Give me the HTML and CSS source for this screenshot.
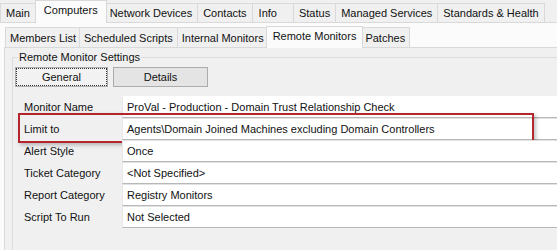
FILE: index.html
```html
<!DOCTYPE html>
<html lang="en">
<head>
  <meta charset="UTF-8" />
  <title>Remote Monitors</title>
  <link rel="stylesheet" href="styles.css">
</head>
<body>
  <div class="tabs top-tabs">
    <span class="tab">Main</span>
    <span class="tab selected">Computers</span>
    <span class="tab">Network Devices</span>
    <span class="tab">Contacts</span>
    <span class="tab wide">Info</span>
    <span class="tab">Status</span>
    <span class="tab">Managed Services</span>
    <span class="tab">Standards &amp; Health</span>
  </div>

  <div class="top-panel">
    <div class="tabs sub-tabs">
      <span class="tab">Members List</span>
      <span class="tab">Scheduled Scripts</span>
      <span class="tab">Internal Monitors</span>
      <span class="tab selected">Remote Monitors</span>
      <span class="tab">Patches</span>
    </div>

    <div class="sub-panel">
      <fieldset class="group">
        <legend>Remote Monitor Settings</legend>

        <div class="buttons">
          <button class="btn focused">General</button>
          <button class="btn details">Details</button>
        </div>

        <div class="props">
          <div class="row">
            <span class="label">Monitor Name</span>
            <span class="value">ProVal - Production - Domain Trust Relationship Check</span>
          </div>
          <div class="row highlighted">
            <span class="label">Limit to</span>
            <span class="value">Agents\Domain Joined Machines excluding Domain Controllers</span>
            <div class="callout"></div>
          </div>
          <div class="row">
            <span class="label">Alert Style</span>
            <span class="value">Once</span>
          </div>
          <div class="row">
            <span class="label">Ticket Category</span>
            <span class="value">&lt;Not Specified&gt;</span>
          </div>
          <div class="row">
            <span class="label">Report Category</span>
            <span class="value">Registry Monitors</span>
          </div>
          <div class="row">
            <span class="label">Script To Run</span>
            <span class="value">Not Selected</span>
          </div>
        </div>
      </fieldset>
    </div>
  </div>
</body>
</html>
```

FILE: styles.css
```css
:root {
  --bg: #f0f0f0;
  --panel: #fbfbfb;
  --line: #d9d9d9;
  --field-line: #b8b8b8;
  --text: #111111;
  --red: #b3262c;
}

* {
  box-sizing: border-box;
}

html, body {
  margin: 0;
  padding: 0;
}

body {
  height: 250px;
  overflow: hidden;
  background: var(--bg);
  color: var(--text);
  font-family: 'Liberation Sans', Arial, sans-serif;
  font-size: 11px;
}

/* tab strips */
.tabs {
  display: flex;
  align-items: flex-end;
  border-bottom: 1px solid var(--line);
}

.tab {
  position: relative;
  border: 1px solid var(--line);
  border-bottom: none;
  margin-right: -1px;
  background: var(--bg);
  white-space: nowrap;
  text-align: center;
}

.tab.selected {
  z-index: 1;
  background: var(--panel);
  margin: 0 -3px -1px -2px;
}

.top-tabs {
  height: 23px;
  background: var(--bg);
}

.top-tabs .tab {
  height: 19px;
  line-height: 18px;
  padding: 0 5px;
}

.top-tabs .tab:first-child {
  padding: 0 7px 0 5px;
}

.top-tabs .tab.wide {
  padding: 0 16px 0 6px;
}

.top-tabs .tab.selected {
  height: 23px;
  line-height: 19px;
  padding: 0 8px;
}

.top-panel {
  background: var(--panel);
  padding: 5px 0 0 4px;
}

.sub-tabs {
  height: 20px;
  padding-left: 1px;
  background: var(--panel);
}

.sub-tabs .tab {
  height: 20px;
  line-height: 20px;
  padding: 0 4px;
}

.sub-tabs .tab:first-child {
  padding: 0 3px 0 4px;
}

.sub-tabs .tab.selected {
  height: 22px;
  line-height: 19px;
  padding: 0 6px;
}

.sub-panel {
  height: 202px;
  background: var(--bg);
  border-left: 1px solid var(--line);
  padding: 3px 0 0 7px;
}

/* group box */
.group {
  height: 199px;
  margin: 0;
  padding: 0;
  border: 1px solid #dcdcdc;
  border-right: none;
  border-bottom: none;
}

.group legend {
  margin-left: 5px;
  padding: 0 1px;
  line-height: 13px;
}

.buttons {
  display: flex;
  gap: 5px;
  margin: 3px 0 0 2px;
}

.btn {
  height: 20px;
  width: 93px;
  font: inherit;
  color: var(--text);
  background: #e4e4e4;
  border: 1px solid #acacac;
  padding: 0;
}

.btn.details {
  width: 95px;
}

.btn.focused {
  background: #f2f2f2;
  outline: 1px dotted #333;
  outline-offset: -2px;
}

/* property rows */
.props {
  margin-top: 9px;
}

.row {
  position: relative;
  display: flex;
  height: 22px;
}

.label {
  width: 109px;
  padding: 5px 0 0 11px;
}

.value {
  flex: 1;
  background: #ffffff;
  border-top: 1px solid #e2e2e2;
  border-bottom: 1px solid var(--field-line);
  border-left: 1px solid #e8e8e8;
  padding: 4px 0 0 4px;
}

.row:first-child .value {
  border-top-color: #ffffff;
}

/* red annotation box drawn over the "Limit to" row */
.callout {
  position: absolute;
  top: -5px;
  left: 5px;
  width: 516px;
  height: 30px;
  border: 2px solid var(--red);
  box-shadow: 2px 2px 4px rgba(0, 0, 0, 0.25);
  pointer-events: none;
}
```
